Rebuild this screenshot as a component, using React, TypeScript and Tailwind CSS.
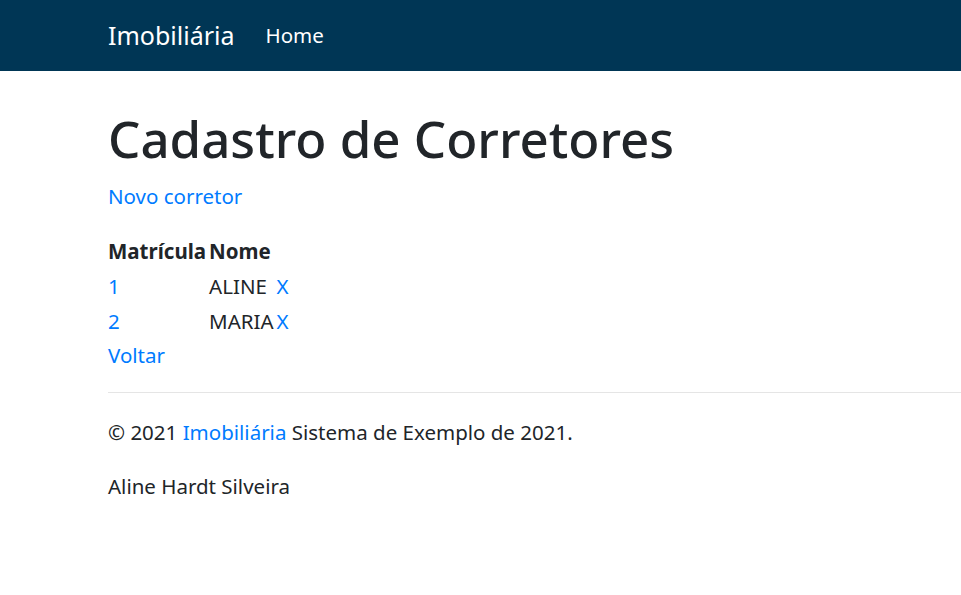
const font = { fontFamily: '"Noto Sans", "Open Sans", sans-serif' };

export default function App() {
  return (
    <div className="min-h-screen bg-white text-[#212529] text-[20.5px] leading-[30px]" style={font}>
      <nav className="bg-[#003655] h-[71px] flex items-center pl-[108px]">
        <a href="#" className="text-white text-[25px] leading-[36px] -mt-[2px]">
          Imobiliária
        </a>
        <a href="#" className="text-white text-[20.5px] ml-[31px] -mt-[1px]">
          Home
        </a>
      </nav>

      <main className="pl-[108px] pt-[37px]">
        <h1 className="text-[51px] font-medium leading-[60px] mb-[13px]">Cadastro de Corretores</h1>
        <p className="mb-[22px]">
          <a href="#" className="text-[#007bff]">
            Novo corretor
          </a>
        </p>

        <table className="border-separate border-spacing-x-[3px] border-spacing-y-0 -ml-[3px]">
          <thead>
            <tr className="h-[35px]">
              <th className="text-left font-bold p-0">Matrícula</th>
              <th className="text-left font-bold p-0">Nome</th>
              <th className="p-0"></th>
            </tr>
          </thead>
          <tbody>
            <tr className="h-[35px]">
              <td className="p-0">
                <a href="#" className="text-[#007bff]">1</a>
              </td>
              <td className="p-0">ALINE</td>
              <td className="p-0">
                <a href="#" className="text-[#007bff]">X</a>
              </td>
            </tr>
            <tr className="h-[35px]">
              <td className="p-0">
                <a href="#" className="text-[#007bff]">2</a>
              </td>
              <td className="p-0">MARIA</td>
              <td className="p-0">
                <a href="#" className="text-[#007bff]">X</a>
              </td>
            </tr>
          </tbody>
        </table>
        <a href="#" className="text-[#007bff] block mt-[2px]">
          Voltar
        </a>
      </main>

      <hr className="ml-[108px] mt-[22px] border-t border-[#e5e5e5]" />

      <footer className="pl-[108px] pt-[24px]">
        <p className="mb-[24px]">
          © 2021{" "}
          <a href="#" className="text-[#007bff]">
            Imobiliária
          </a>{" "}
          Sistema de Exemplo de 2021.
        </p>
        <p>Aline Hardt Silveira</p>
      </footer>
    </div>
  );
}
